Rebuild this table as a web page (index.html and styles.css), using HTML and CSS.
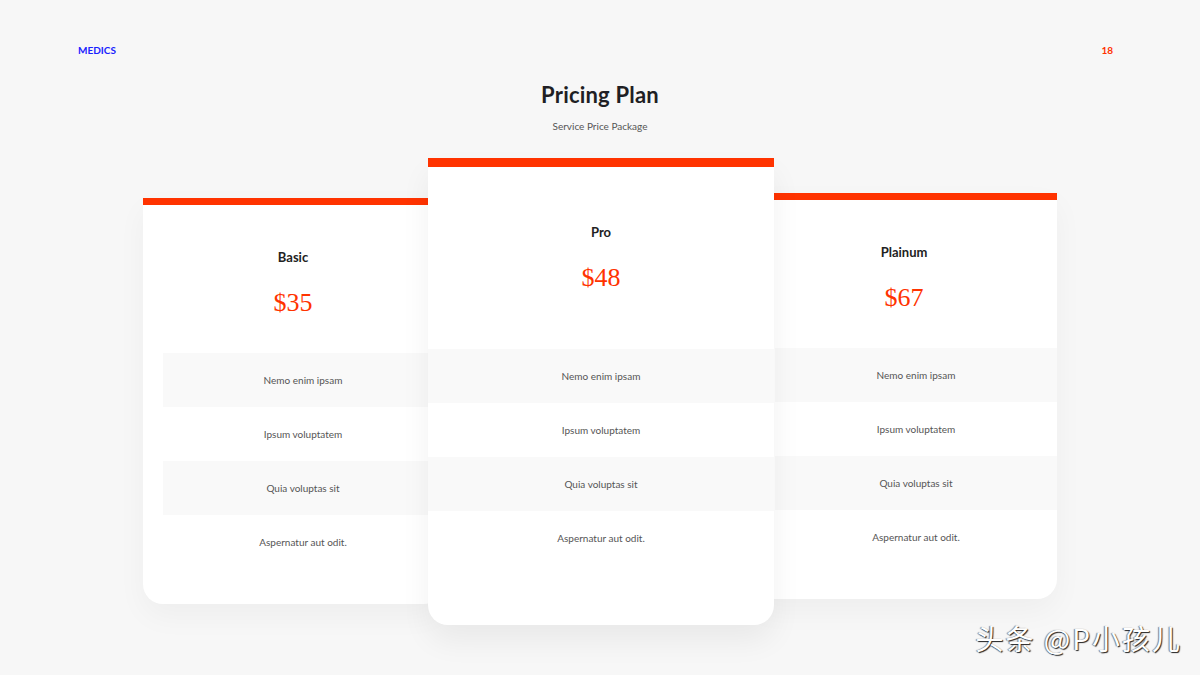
FILE: index.html
```html
<!DOCTYPE html>
<html lang="en">
<head>
<meta charset="utf-8">
<title>Pricing Plan</title>
<link rel="stylesheet" href="styles.css">
</head>
<body>
<div class="slide">
  <header class="top">
    <span class="brand">MEDICS</span>
    <span class="page">18</span>
  </header>
  <div class="heading">
    <h1 class="title">Pricing Plan</h1>
    <p class="subtitle">Service Price Package</p>
  </div>
  <div class="cards">
    <div class="card card-left">
      <div class="bar"></div>
      <div class="card-head">
        <div class="plan">Basic</div>
        <div class="price">$35</div>
      </div>
      <ul class="rows">
        <li class="row alt">Nemo enim ipsam</li>
        <li class="row">Ipsum voluptatem</li>
        <li class="row alt">Quia voluptas sit</li>
        <li class="row">Aspernatur aut odit.</li>
      </ul>
    </div>
    <div class="card card-main">
      <div class="bar"></div>
      <div class="card-head">
        <div class="plan">Pro</div>
        <div class="price">$48</div>
      </div>
      <ul class="rows">
        <li class="row alt">Nemo enim ipsam</li>
        <li class="row">Ipsum voluptatem</li>
        <li class="row alt">Quia voluptas sit</li>
        <li class="row">Aspernatur aut odit.</li>
      </ul>
    </div>
    <div class="card card-right">
      <div class="bar"></div>
      <div class="card-head">
        <div class="plan">Plainum</div>
        <div class="price">$67</div>
      </div>
      <ul class="rows">
        <li class="row alt">Nemo enim ipsam</li>
        <li class="row">Ipsum voluptatem</li>
        <li class="row alt">Quia voluptas sit</li>
        <li class="row">Aspernatur aut odit.</li>
      </ul>
    </div>
  </div>
  <div class="watermark">头条 @P小孩儿</div>
</div>
</body>
</html>
```
FILE: styles.css
```css
* { box-sizing: border-box; }
html, body { margin: 0; padding: 0; }
body {
  background: #f7f7f7;
  font-family: Lato, "Open Sans", "Noto Sans", sans-serif;
}
.slide {
  position: relative;
  width: 1200px;
  height: 675px;
  overflow: hidden;
  background: #f7f7f7;
}
.top {
  display: flex;
  justify-content: space-between;
  padding: 44px 87px 0 78px;
  font-size: 10px;
  line-height: 12px;
  font-weight: 700;
}
.brand { color: #1a22ff; }
.page { color: #ff3300; }
.heading { text-align: center; margin-top: 25px; }
.title {
  margin: 0;
  font-size: 22px;
  line-height: 28px;
  font-weight: 700;
  color: #1f1f24;
  letter-spacing: 0.2px;
}
.subtitle {
  margin: 10px 0 0;
  font-size: 10px;
  line-height: 14px;
  color: #555;
}
.cards {
  display: flex;
  justify-content: center;
  align-items: flex-start;
  margin-top: 25px;
}
.card {
  background: #fff;
  border-radius: 0 0 20px 20px;
  box-shadow: 0 12px 30px rgba(0, 0, 0, 0.04);
  overflow: hidden;
}
.bar { height: 7px; background: #ff3300; }
.card-head { text-align: center; padding-top: 42px; padding-bottom: 35px; }
.plan {
  font-size: 13px;
  line-height: 20px;
  font-weight: 700;
  color: #222;
}
.price {
  margin-top: 21px;
  font-family: "Liberation Serif", "DejaVu Serif", serif;
  font-size: 26px;
  line-height: 30px;
  color: #ff3300;
}
.rows { list-style: none; margin: 0; padding: 0; }
.row {
  height: 54px;
  display: flex;
  align-items: center;
  justify-content: center;
  font-size: 10px;
  color: #555;
}
.row.alt { background: #f9f9f9; }

.card-left {
  width: 300px;
  height: 406px;
  margin-top: 40px;
  margin-right: -15px;
}
.card-left .rows { margin-left: 20px; }
.card-main {
  position: relative;
  z-index: 2;
  width: 346px;
  height: 467px;
  box-shadow: 0 16px 30px rgba(0, 0, 0, 0.06);
}
.card-main .bar { height: 9px; }
.card-main .card-head { padding-top: 55px; padding-bottom: 56px; }
.card-right {
  width: 306px;
  height: 406px;
  margin-top: 35px;
  margin-left: -23px;
}
.card-right .rows { margin-left: 24px; }

.watermark {
  position: absolute;
  right: 18px;
  bottom: 21px;
  font-family: "Noto Sans CJK SC", sans-serif;
  font-size: 28px;
  line-height: 32px;
  letter-spacing: 2px;
  color: #fff;
  text-shadow: 1px 1px 1px #222, -1px 0 1px rgba(0,0,0,0.5);
}
```
